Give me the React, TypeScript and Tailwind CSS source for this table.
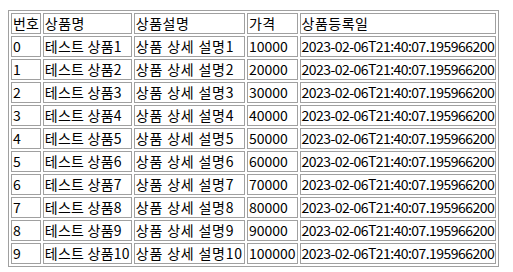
const ROWS = Array.from({ length: 10 }, (_, i) => ({
  id: i,
  name: `테스트 상품${i + 1}`,
  desc: `상품 상세 설명${i + 1}`,
  price: (i + 1) * 10000,
  createdAt: '2023-02-06T21:40:07.195966200',
}))

const HEADERS = ['번호', '상품명', '상품설명', '가격', '상품등록일']

const cell = 'border border-[#a0a0a0] px-[1px] py-[1px] text-left font-normal align-middle whitespace-nowrap'

export default function App() {
  return (
    <div className="bg-white pl-[8px] pt-[10px] text-[14px] leading-[17px] text-black [font-family:'Noto_Sans_CJK_KR','Malgun_Gothic',sans-serif]">
      <table className="border-separate border-spacing-[2px] border border-[#a0a0a0]">
        <thead>
          <tr>
            {HEADERS.map((h, i) => (
              <th key={h} className={`${cell} ${i === 0 ? '' : 'tracking-[0.5px]'}`}>
                {h}
              </th>
            ))}
          </tr>
        </thead>
        <tbody>
          {ROWS.map((r) => (
            <tr key={r.id}>
              <td className={cell}>{r.id}</td>
              <td className={`${cell} tracking-[0.25px]`}>{r.name}</td>
              <td className={`${cell} tracking-[0.8px]`}>{r.desc}</td>
              <td className={cell}>{r.price}</td>
              <td className={`${cell} tracking-[-0.55px]`}>{r.createdAt}</td>
            </tr>
          ))}
        </tbody>
      </table>
    </div>
  )
}
